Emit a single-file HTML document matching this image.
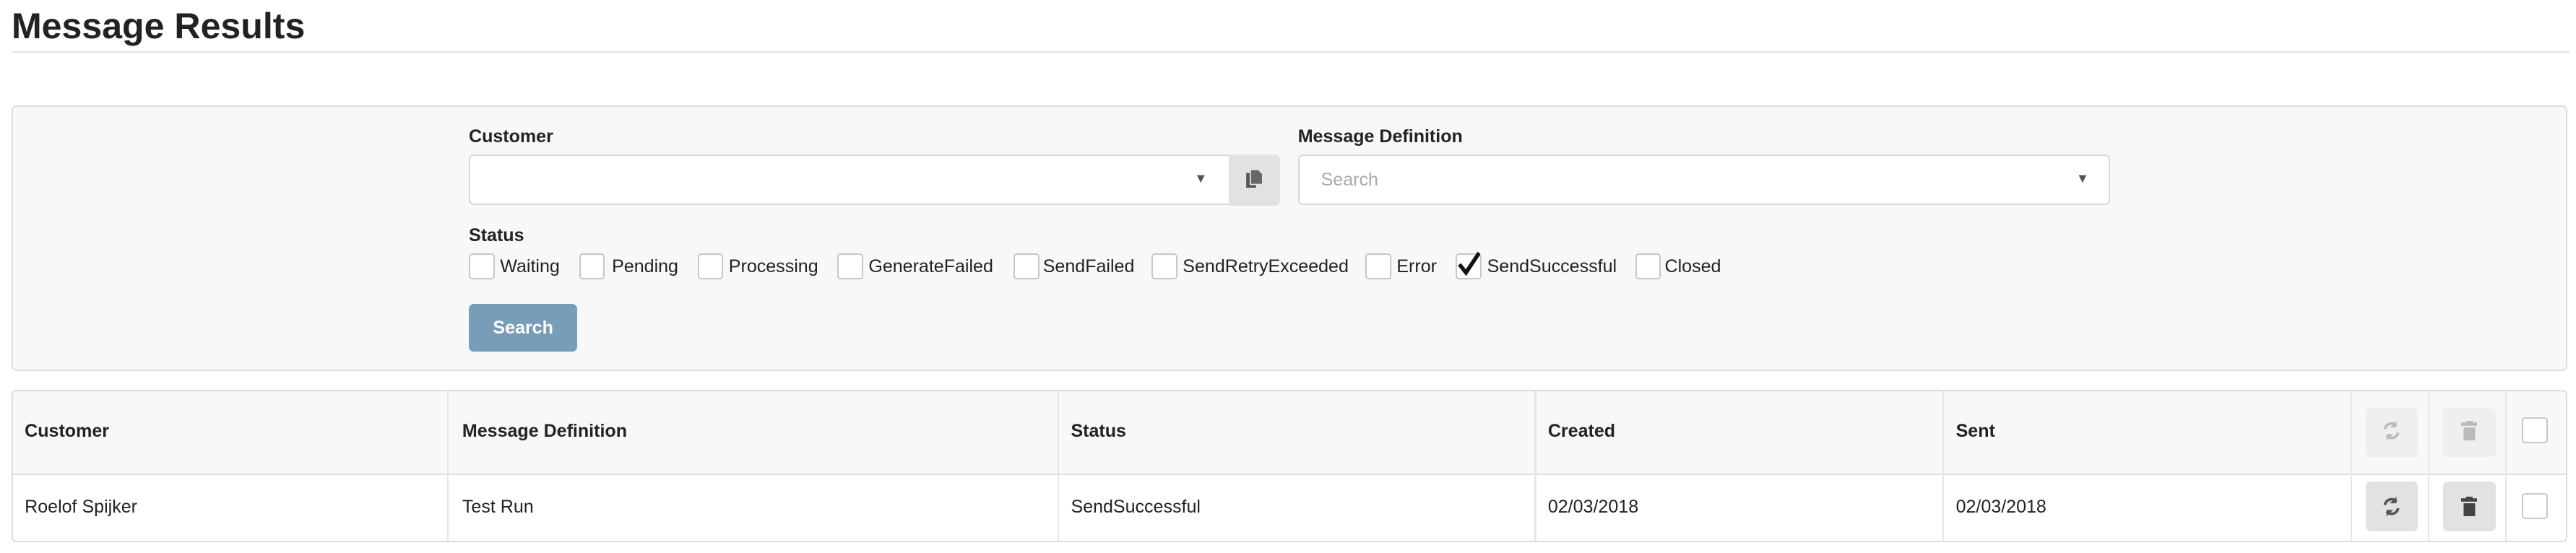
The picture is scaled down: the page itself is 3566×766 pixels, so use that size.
<!DOCTYPE html>
<html><head><meta charset="utf-8"><style>
html,body{margin:0;padding:0;background:#fff;overflow:hidden}
body{width:3566px;height:766px}
#w{zoom:2.2772;width:1566px;height:336px;position:relative;font-family:"Liberation Sans",sans-serif;color:#222;font-size:11px}
.a{position:absolute}
h1{position:absolute;left:7px;top:3px;margin:0;font-size:22px;font-weight:bold;color:#222}
.lbl{font-weight:bold;font-size:11px}
.cb{position:absolute;width:14px;height:14px;border:1px solid #c8c8c8;border-radius:2px;background:#fff}
.ct{position:absolute;font-size:11px}
.btn{position:absolute;width:32px;height:30px;border-radius:3px}
.col{position:absolute;top:0;bottom:0;width:1px;background:#e6e6e6}
</style></head><body><div id="w">
<h1>Message Results</h1>
<div class="a" style="left:7px;top:31px;width:1555px;height:1px;background:#e3e3e3"></div>

<div class="a" style="left:7px;top:64px;width:1552px;height:160px;background:#f7f8f9;border:1px solid #dcdcdc;border-radius:3px"></div>
<div class="a lbl" style="left:285px;top:77px">Customer</div>
<div class="a" style="left:285px;top:94px;width:461px;height:29px;background:#fff;border:1px solid #d8d8d8;border-radius:3px 0 0 3px"></div>
<div class="a" style="left:726px;top:104px;font-size:8px;color:#555">▼</div>
<div class="a" style="left:747px;top:94px;width:31px;height:31px;background:#e2e2e2;border-radius:0 3px 3px 0"></div>
<svg class="a" style="left:757px;top:103px" width="11" height="12" viewBox="0 0 11 12"><rect x="0.5" y="2" width="6" height="9" fill="#555"/><path d="M3 0h5l2.5 2.5V9H3z" fill="#666" stroke="#e2e2e2" stroke-width="0.8"/></svg>
<div class="a lbl" style="left:789px;top:77px">Message Definition</div>
<div class="a" style="left:789px;top:94px;width:492px;height:29px;background:#fff;border:1px solid #d8d8d8;border-radius:3px"></div>
<div class="a" style="left:803px;top:103px;color:#aaa">Search</div>
<div class="a" style="left:1262px;top:104px;font-size:8px;color:#555">▼</div>

<div class="a lbl" style="left:285px;top:137px">Status</div>
<div class="cb" style="left:285px;top:154px"></div><div class="ct" style="left:304px;top:156px">Waiting</div>
<div class="cb" style="left:352px;top:154px"></div><div class="ct" style="left:372px;top:156px">Pending</div>
<div class="cb" style="left:424px;top:154px"></div><div class="ct" style="left:443px;top:156px">Processing</div>
<div class="cb" style="left:509px;top:154px"></div><div class="ct" style="left:528px;top:156px">GenerateFailed</div>
<div class="cb" style="left:616px;top:154px"></div><div class="ct" style="left:634px;top:156px">SendFailed</div>
<div class="cb" style="left:700px;top:154px"></div><div class="ct" style="left:719px;top:156px">SendRetryExceeded</div>
<div class="cb" style="left:830px;top:154px"></div><div class="ct" style="left:849px;top:156px">Error</div>
<div class="cb" style="left:885px;top:154px"></div>
<svg class="a" style="left:886px;top:153px" width="14" height="15" viewBox="0 0 14 15"><path d="M1 8l4 5L13 1" fill="none" stroke="#111" stroke-width="2.4"/></svg>
<div class="ct" style="left:904px;top:156px">SendSuccessful</div>
<div class="cb" style="left:994px;top:154px"></div><div class="ct" style="left:1012px;top:156px">Closed</div>

<div class="a" style="left:285px;top:185px;width:66px;height:29px;background:#789db8;border-radius:3px;color:#fff;font-weight:bold;text-align:center;line-height:29px">Search</div>

<div class="a" style="left:7px;top:237px;width:1552px;height:91px;border:1px solid #dcdcdc;border-radius:3px;overflow:hidden">
 <div class="a" style="left:0;top:0;width:100%;height:50px;background:#f7f8f9;border-bottom:1px solid #e0e0e0"></div>
 <div class="col" style="left:264px"></div><div class="col" style="left:635px"></div><div class="col" style="left:925px"></div><div class="col" style="left:1173px"></div><div class="col" style="left:1421px"></div><div class="col" style="left:1468px"></div><div class="col" style="left:1515px"></div>
</div>
<div class="a lbl" style="left:15px;top:256px">Customer</div>
<div class="a lbl" style="left:281px;top:256px">Message Definition</div>
<div class="a lbl" style="left:651px;top:256px">Status</div>
<div class="a lbl" style="left:941px;top:256px">Created</div>
<div class="a lbl" style="left:1189px;top:256px">Sent</div>
<div class="btn" style="left:1438px;top:248px;background:#efefef"></div>
<div class="btn" style="left:1485px;top:248px;background:#efefef"></div>
<div class="cb" style="left:1533px;top:254px"></div>
<div class="a" style="left:15px;top:302px">Roelof Spijker</div>
<div class="a" style="left:281px;top:302px">Test Run</div>
<div class="a" style="left:651px;top:302px">SendSuccessful</div>
<div class="a" style="left:941px;top:302px">02/03/2018</div>
<div class="a" style="left:1189px;top:302px">02/03/2018</div>
<div class="btn" style="left:1438px;top:293px;background:#e2e2e2"></div>
<div class="btn" style="left:1485px;top:293px;background:#e2e2e2"></div>
<div class="cb" style="left:1533px;top:300px"></div>
<svg class="a" style="left:1448px;top:256px" width="12" height="12" viewBox="0 0 12 12"><path d="M2 5a4 4 0 0 1 7-2M10 7a4 4 0 0 1-7 2" fill="none" stroke="#bbb" stroke-width="1.6"/><path d="M9 0v4H5zM3 12V8h4z" fill="#bbb"/></svg>
<svg class="a" style="left:1496px;top:256px" width="10" height="12" viewBox="0 0 10 12"><rect x="0" y="1" width="10" height="2" fill="#bbb"/><rect x="3" y="0" width="4" height="2" fill="#bbb"/><rect x="1.5" y="4" width="7" height="8" fill="#bbb"/></svg>
<svg class="a" style="left:1448px;top:302px" width="12" height="12" viewBox="0 0 12 12"><path d="M2 5a4 4 0 0 1 7-2M10 7a4 4 0 0 1-7 2" fill="none" stroke="#555" stroke-width="1.6"/><path d="M9 0v4H5zM3 12V8h4z" fill="#555"/></svg>
<svg class="a" style="left:1496px;top:302px" width="10" height="12" viewBox="0 0 10 12"><rect x="0" y="1" width="10" height="2" fill="#444"/><rect x="3" y="0" width="4" height="2" fill="#444"/><rect x="1.5" y="4" width="7" height="8" fill="#444"/></svg>
</div></body></html>
